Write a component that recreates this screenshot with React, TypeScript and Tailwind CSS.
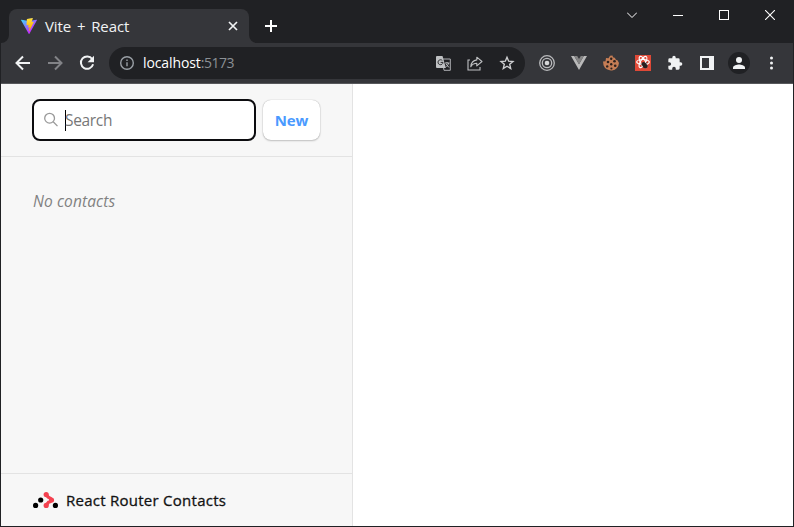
import type { ReactNode } from 'react';

function Slot({ children, className = 'w-8' }: { children: ReactNode; className?: string }) {
  return <div className={`flex h-8 shrink-0 items-center justify-center ${className}`}>{children}</div>;
}

function ViteLogo() {
  return (
    <svg width="16" height="16" viewBox="0 0 256 257" className="shrink-0">
      <defs>
        <linearGradient id="vite-a" x1="-.8%" x2="57.6%" y1="7.7%" y2="78.4%">
          <stop offset="0%" stopColor="#41D1FF" />
          <stop offset="100%" stopColor="#BD34FE" />
        </linearGradient>
        <linearGradient id="vite-b" x1="43.4%" x2="50.3%" y1="2.2%" y2="89%">
          <stop offset="0%" stopColor="#FFEA83" />
          <stop offset="8.3%" stopColor="#FFDD35" />
          <stop offset="100%" stopColor="#FFA800" />
        </linearGradient>
      </defs>
      <path fill="url(#vite-a)" d="M255.153 37.938 134.897 252.976c-2.483 4.44-8.862 4.466-11.382.048L.875 37.958c-2.746-4.814 1.371-10.646 6.827-9.67l120.385 21.517a6.537 6.537 0 0 0 2.322-.004l117.867-21.483c5.438-.991 9.574 4.796 6.877 9.62Z" />
      <path fill="url(#vite-b)" d="M185.432.063 96.44 17.501a3.268 3.268 0 0 0-2.634 3.014l-5.474 92.456a3.268 3.268 0 0 0 3.997 3.378l24.777-5.718c2.318-.535 4.413 1.507 3.936 3.838l-7.361 36.047c-.495 2.426 1.782 4.5 4.151 3.78l15.304-4.649c2.372-.72 4.652 1.36 4.15 3.788l-11.698 56.621c-.732 3.542 3.979 5.473 5.943 2.437l1.313-2.028 72.516-144.72c1.215-2.423-.88-5.186-3.54-4.672l-25.505 4.922c-2.396.462-4.435-1.77-3.759-4.114l16.646-57.705c.677-2.35-1.37-4.583-3.769-4.113Z" />
    </svg>
  );
}

function TabStrip() {
  return (
    <div className="flex h-[43px] bg-[#202124]">
      <div className="flex w-2 items-end">
        <svg width="8" height="8"><path d="M8 0a8 8 0 0 1-8 8h8z" fill="#35363a" /></svg>
      </div>
      <div className="mt-[9px] flex w-[240px] items-center rounded-t-lg bg-[#35363a] pr-[11px] pl-3">
        <ViteLogo />
        <span className="ml-2 flex-1 whitespace-nowrap pb-px text-[15px] leading-5 tracking-[-0.1px] text-[#f1f3f4] [word-spacing:2px]">Vite + React</span>
        <svg width="10" height="10" viewBox="0 0 10 10" stroke="#f1f3f4" strokeWidth="1.7"><path d="m1 1 8 8M9 1 1 9" /></svg>
      </div>
      <div className="flex w-2 items-end">
        <svg width="8" height="8"><path d="M0 0a8 8 0 0 0 8 8H0z" fill="#35363a" /></svg>
      </div>
      <div className="mt-[10px] ml-[-2px] flex-1">
        <Slot><svg width="12" height="12" viewBox="0 0 12 12" stroke="#fff" strokeWidth="2"><path d="M6 0v12M0 6h12" /></svg></Slot>
      </div>
      <div className="flex h-[30px]">
        <Slot className="w-[46px] pb-[2px]"><svg width="10" height="10" viewBox="0 0 10 10" fill="none" stroke="#fff" strokeWidth="1"><path d="m0 2.500 5 5 5-5" /></svg></Slot>
        <Slot className="w-[46px] pb-px"><div className="h-px w-[10px] bg-white" /></Slot>
        <Slot className="w-[46px] pb-[3px]"><div className="mt-px size-[10px] border border-white" /></Slot>
        <Slot className="w-[46px] pb-[2px]"><svg width="10" height="10" viewBox="0 0 10 10" stroke="#fff" strokeWidth="1.1"><path d="m0 0 10 10M10 0 0 10" /></svg></Slot>
      </div>
    </div>
  );
}

function Arrow({ back }: { back?: boolean }) {
  return (
    <svg width="16" height="16" viewBox="0 0 16 16" fill="none" strokeWidth="2" className={back ? 'stroke-[#f1f3f4]' : 'rotate-180 stroke-[#828387]'}>
      <path d="M15 8H2M8 1.5 1.5 8 8 14.5" />
    </svg>
  );
}

function AddressBar() {
  return (
    <div className="ml-[6px] flex h-8 w-[416px] items-center rounded-full bg-[#202124] pr-[2px] pl-[11px]">
      <svg width="14" height="14" viewBox="0 0 14 14" fill="none" stroke="#9aa0a6" strokeWidth="1.4">
        <circle cx="7" cy="7" r="6.3" /><path d="M7 6.2v4M7 3.4v1.5" />
      </svg>
      <span className="ml-[9px] flex-1 whitespace-nowrap text-[14px] leading-5 tracking-[-0.1px] text-white">localhost<span className="tracking-[-0.5px] text-[#8b9095]">:5173</span></span>
      <Slot>
        <svg width="15" height="15" viewBox="0 0 15 15" fill="none">
          <path d="M6 3h8.3v11.3H8z" stroke="#aeb0b3" strokeWidth="1" />
          <path d="M1 0h5.5l3.4 12H1a1 1 0 0 1-1-1V1a1 1 0 0 1 1-1z" fill="#bfc1c3" />
          <path d="M6.3 4.5A2.500 2.500 0 1 0 7 6.400H4.600" stroke="#303134" strokeWidth="1" />
          <path d="M9 7h4.500M11 6v1m1.500 0c-.3 1.800-1 2.800-2 3.800M10 8l3 3.500" stroke="#bfc1c3" strokeWidth="1" />
        </svg>
      </Slot>
      <Slot>
        <svg width="16" height="15" viewBox="0 0 16 15" fill="none" stroke="#bfc1c3" strokeWidth="1.1">
          <path d="M3 4H1v10h12v-3" /><path d="M9.8 1.2 15 5.5 9.8 9.8V7.2C7 7.2 5.1 8.4 3.8 10.700c.3-3.800 2.200-6.300 6-6.800z" strokeLinejoin="round" />
        </svg>
      </Slot>
      <Slot>
        <svg width="16" height="16" viewBox="0 0 24 24" fill="none" stroke="#d0d1d3" strokeWidth="2"><path d="m12 3.200 2.500 6 6.500.5-5 4.200 1.600 6.400L12 16.900l-5.600 3.400L8 13.900 3 9.700l6.500-.5z" /></svg>
      </Slot>
    </div>
  );
}

function Toolbar() {
  return (
    <div className="flex h-[41px] items-center border-b border-[#57585b] bg-[#35363a] pl-[6px]">
      <Slot><Arrow back /></Slot>
      <Slot><Arrow /></Slot>
      <Slot>
        <svg width="16" height="16" viewBox="0 0 16 16"><path d="M13.200 4A6.200 6.200 0 1 0 14.100 9.300" fill="none" stroke="#f1f3f4" strokeWidth="2" /><path d="M15 .8v6.400H8.600z" fill="#f1f3f4" /></svg>
      </Slot>
      <AddressBar />
      <div className="ml-[6px] flex">
        <Slot><svg width="16" height="16" viewBox="0 0 16 16" fill="none" stroke="#b9babc" strokeWidth="1.300"><circle cx="8" cy="8" r="7.300" /><circle cx="8" cy="8" r="4.700" /><circle cx="8" cy="8" r="2.300" fill="#d5d6d7" stroke="none" /></svg></Slot>
        <Slot><svg width="16" height="14" viewBox="0 0 16 14"><path d="M0 0h3.200L8 8.300 12.800 0H16L8 14z" fill="#b9b9b9" /><path d="M3.200 0h3L8 3l1.800-3h3L8 8.300z" fill="#858585" /></svg></Slot>
        <Slot>
          <svg width="16" height="16" viewBox="0 0 16 16"><path d="M9.500.5c.2 1.500 1 2.300 2.500 2.300.2 1.500 1 2.200 2.500 2.500L16 8a8 8 0 0 1-15.500 2.200L0 6.500l2.500-.3L3 3l2.500.3L7 .8z" fill="#c47d55" /><g fill="#2b211e"><circle cx="8.200" cy="3.800" r="1.200" /><circle cx="5" cy="7" r="1.300" /><circle cx="11.500" cy="6.300" r="1.300" /><circle cx="8.200" cy="9.300" r="1.200" /><circle cx="4.200" cy="11.400" r="1.200" /><circle cx="12.200" cy="10.800" r="1.300" /><circle cx="8.400" cy="13.500" r="1.100" /></g></svg>
        </Slot>
        <Slot>
          <svg width="16" height="16" viewBox="0 0 16 16"><path fill="#df4937" d="M0 0h16v16H0z" /><g fill="none" stroke="#fff" strokeWidth="1.200"><ellipse cx="8" cy="7" rx="6.300" ry="2.500" /><ellipse cx="8" cy="7" rx="6.300" ry="2.500" transform="rotate(60 8 7)" /><ellipse cx="8" cy="7" rx="6.300" ry="2.500" transform="rotate(120 8 7)" /></g><ellipse cx="9.600" cy="10.200" rx="2.300" ry="3.500" transform="rotate(-35 9.600 10.200)" fill="#292020" /><path d="m6 9 7 2M8 13l4-6" stroke="#292020" strokeWidth=".8" /></svg>
        </Slot>
        <Slot><svg width="16" height="16" viewBox="0 0 24 24" fill="#f1f3f4"><path d="M20.500 11H19V7a2 2 0 0 0-2-2h-4V3.500a2.500 2.500 0 0 0-5 0V5H4a2 2 0 0 0-2 2v3.800h1.500a2.700 2.700 0 0 1 0 5.400H2V20a2 2 0 0 0 2 2h3.800v-1.500a2.700 2.700 0 0 1 5.400 0V22H17a2 2 0 0 0 2-2v-4h1.500a2.500 2.500 0 0 0 0-5z" /></svg></Slot>
        <Slot><div className="h-[14px] w-[14px] border-2 border-r-[5px] border-[#f1f3f4]" /></Slot>
        <Slot><div className="flex size-[22px] items-center justify-center rounded-full bg-[#202124]"><svg width="12" height="12" viewBox="0 0 12 12" fill="#f1f3f4"><circle cx="6" cy="3" r="3" /><path d="M0 12v-1.500C0 8.500 4 7.500 6 7.500s6 1 6 3V12z" /></svg></div></Slot>
        <Slot><svg width="4" height="14" viewBox="0 0 4 14" fill="#f1f3f4"><circle cx="2.500" cy="2" r="1.500" /><circle cx="2.500" cy="7" r="1.500" /><circle cx="2.500" cy="12" r="1.500" /></svg></Slot>
      </div>
    </div>
  );
}

function RouterLogo() {
  return (
    <svg width="25" height="16" viewBox="0 0 25 16" className="shrink-0">
      <path d="M13.200 2.800 15.500 5.300q2.500 1 3 2.700-.5 1.700-3 2.200l-2.300 3" fill="none" stroke="#f44250" strokeWidth="3.200" />
      <g fill="#f44250"><circle cx="13.200" cy="2.600" r="2.600" /><circle cx="18.500" cy="8" r="2.600" /><circle cx="13.200" cy="13.400" r="2.600" /></g>
      <g><circle cx="2.600" cy="13.400" r="2.600" /><circle cx="7.700" cy="8" r="2.600" /><circle cx="22.400" cy="13.400" r="2.600" /></g>
    </svg>
  );
}

function Sidebar() {
  return (
    <aside className="flex w-[352px] flex-col border-r border-[#e3e3e3] bg-[#f7f7f7] text-[15.5px] leading-6">
      <div className="flex h-[73px] items-center gap-[7px] border-b border-[#e3e3e3] pl-[31px]">
        <div className="flex h-[42px] w-[224px] items-center rounded-lg border-2 border-[#0c0c0f] bg-white pl-[9px]">
          <svg width="16" height="16" viewBox="0 0 16 16" fill="none" stroke="#999" strokeWidth="1.300"><circle cx="6.600" cy="6.200" r="4.900" /><path d="m10.200 9.800 4.300 4.300" /></svg>
          <div className="ml-[6px] h-[21px] w-px bg-black" />
          <span className="ml-[-1px] tracking-[-0.32px] text-[#777]">Search</span>
        </div>
        <button className="h-10 w-[57px] rounded-lg bg-white text-[15px] font-bold tracking-[-0.2px] text-[#4a9aff] shadow-[0_0_1px_rgba(0,0,0,.35),0_1px_2px_rgba(0,0,0,.2)]">New</button>
      </div>
      <div className="flex-1 pt-8 pl-8 tracking-[0.11px] text-[#818181] italic">No contacts</div>
      <div className="flex h-[53px] items-center border-t border-[#e3e3e3] pl-8 text-[15px] text-[#121212]">
        <RouterLogo />
        <span className="ml-2 whitespace-nowrap tracking-[0.26px] [-webkit-text-stroke:0.3px_#121212]">React Router Contacts</span>
      </div>
    </aside>
  );
}

export default function App() {
  return (
    <div className="flex h-[527px] w-[794px] flex-col overflow-hidden border-x border-b border-[#202124] bg-white font-['Open_Sans','Noto_Sans',sans-serif]">
      <TabStrip />
      <Toolbar />
      <div className="flex min-h-0 flex-1">
        <Sidebar />
        <main className="flex-1 bg-white" />
      </div>
    </div>
  );
}
